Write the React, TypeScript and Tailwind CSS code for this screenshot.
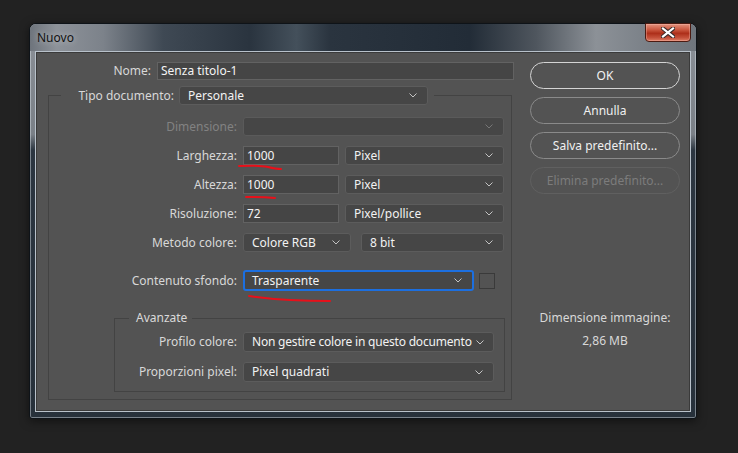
import React from "react";

function Chevron({ dim = false }: { dim?: boolean }) {
  return (
    <svg width="8" height="5" viewBox="0 0 8 5" className="shrink-0">
      <polyline
        points="0.5,0.5 4,4 7.5,0.5"
        fill="none"
        stroke={dim ? "#777" : "#c4c4c4"}
        strokeWidth="1"
      />
    </svg>
  );
}

function Select({
  value,
  w,
  h = "h-[19px]",
  active = false,
  disabled = false,
  tight = false,
}: {
  value?: string;
  w: string;
  h?: string;
  active?: boolean;
  disabled?: boolean;
  tight?: boolean;
}) {
  return (
    <div
      className={`${w} ${h} flex shrink-0 items-center justify-between gap-[4px] rounded-[3px] bg-[#464646] pr-[10px] ${
        active
          ? "border-2 border-[#1c6fe0] pl-[7px]"
          : disabled
          ? "border border-[#5a5a5a] bg-[#4c4c4c] pl-[8px]"
          : "border border-[#5c5c5c] pl-[8px]"
      }`}
    >
      <span className={`whitespace-nowrap text-[#f2f2f2] ${tight ? "tracking-[-0.2px]" : ""}`}>{value}</span>
      <Chevron dim={disabled} />
    </div>
  );
}

function Input({ value, w }: { value: string; w: string }) {
  return (
    <div
      className={`${w} flex h-[19px] shrink-0 items-center border border-[#626262] bg-[#454545] pl-[3px] text-[#f4f4f4]`}
    >
      {value}
    </div>
  );
}

function Label({ w, children, dim = false }: { w: string; children: React.ReactNode; dim?: boolean }) {
  return (
    <span className={`${w} shrink-0 whitespace-nowrap text-right ${dim ? "text-[#828282]" : "text-[#d8d8d8]"}`}>
      {children}
    </span>
  );
}

function Button({ children, variant = "normal" }: { children: React.ReactNode; variant?: "primary" | "normal" | "disabled" }) {
  const cls =
    variant === "primary"
      ? "border-[1.5px] border-[#d4d4d4] text-[#f2f2f2]"
      : variant === "disabled"
      ? "border border-[#606060] text-[#7c7c7c]"
      : "border border-[#8a8a8a] text-[#f0f0f0]";
  return (
    <div className={`flex h-[27px] w-[150px] items-center justify-center rounded-full ${cls}`}>
      {children}
    </div>
  );
}

export default function App() {
  return (
    <div className="relative h-[453px] w-[738px] overflow-hidden bg-[#222222] pl-[29px] pt-[23px] font-['Noto_Sans',sans-serif] text-[12px] leading-[16px]">
      {/* window */}
      <div className="relative flex h-[396px] w-[668px] flex-col rounded-t-[7px] rounded-b-[3px] border border-[#0e1318] bg-[linear-gradient(180deg,#8c9198_0%,#7a8087_28%,#2c3641_32%,#27313b_100%)] shadow-[inset_0_0_0_1px_rgba(220,228,236,0.45),0_2px_10px_rgba(0,0,0,0.5)]">
        {/* title bar */}
        <div className="flex h-[27px] items-center rounded-t-[6px] bg-[linear-gradient(90deg,#6e747c_0%,#8d9299_4%,#7c828a_11%,#3f4954_20%,#2a343f_33%,#44505b_40%,#2a343f_45%,#222c37_66%,#4f565e_76%,#8c9197_85%,#7c8289_92%,#6f757c_100%)] pl-[7px] pt-[1px]">
          <span className="text-[#111] [text-shadow:0_0_6px_rgba(255,255,255,0.5)]">Nuovo</span>
        </div>
        {/* close button */}
        <div className="absolute right-[5px] top-[-1px] flex h-[19px] w-[46px] items-center justify-center rounded-b-[4px] border border-[#4b1b12] bg-[linear-gradient(180deg,#e3937f_0%,#c9553d_35%,#ad2f1a_55%,#c4503a_80%,#dd7c63_100%)] shadow-[inset_0_0_0_1px_rgba(255,200,190,0.35)]">
          <svg width="14" height="11" viewBox="0 0 14 11">
            <path d="M2 1.5 L12 9.5 M12 1.5 L2 9.5" stroke="#3a2a28" strokeWidth="4.2" strokeLinecap="square" />
            <path d="M2 1.5 L12 9.5 M12 1.5 L2 9.5" stroke="#ffffff" strokeWidth="2.2" strokeLinecap="square" />
          </svg>
        </div>

        {/* content */}
        <div className="mx-[5px] mb-[6px] flex flex-1 border border-[#b8c1ca] bg-[#535353] shadow-[inset_0_0_0_1px_#3a3a3a]">
          {/* left column */}
          <div className="flex w-[478px] flex-col">
            <div className="mt-[10px] flex h-[18px] items-center gap-[6px]">
              <Label w="w-[115px]">Nome:</Label>
              <div className="flex h-[18px] w-[357px] items-center border border-[#626262] bg-[#454545] pl-[3px] text-[#f4f4f4]">
                Senza titolo-1
              </div>
            </div>

            <fieldset className="ml-[12px] mt-[6px] w-[464px] border border-[#434343] pb-[7px]">
              <legend className="ml-[12px] pr-[6px]">
                <div className="flex items-center gap-[5px]">
                  <Label w="w-[113px]">Tipo documento:</Label>
                  <Select value="Personale" w="w-[249px]" />
                </div>
              </legend>

              <div className="flex flex-col gap-[10px] pt-[12px]">
                <div className="flex items-center gap-[6px]">
                  <Label w="w-[188px]" dim>
                    Dimensione:
                  </Label>
                  <Select w="w-[261px]" disabled />
                </div>
                <div className="flex items-center gap-[6px]">
                  <Label w="w-[188px]">Larghezza:</Label>
                  <Input value="1000" w="w-[96px]" />
                  <Select value="Pixel" w="w-[159px]" />
                </div>
                <div className="flex items-center gap-[6px]">
                  <Label w="w-[188px]">Altezza:</Label>
                  <Input value="1000" w="w-[96px]" />
                  <Select value="Pixel" w="w-[159px]" />
                </div>
                <div className="flex items-center gap-[6px]">
                  <Label w="w-[188px]">Risoluzione:</Label>
                  <Input value="72" w="w-[96px]" />
                  <Select value="Pixel/pollice" w="w-[159px]" />
                </div>
                <div className="flex items-center gap-[10px]">
                  <div className="flex items-center gap-[6px]">
                    <Label w="w-[188px]">Metodo colore:</Label>
                    <Select value="Colore RGB" w="w-[108px]" />
                  </div>
                  <Select value="8 bit" w="w-[143px]" />
                </div>
                <div className="mt-[8px] flex items-center gap-[5px]">
                  <div className="flex items-center gap-[6px]">
                    <Label w="w-[188px]">Contenuto sfondo:</Label>
                    <Select value="Trasparente" w="w-[231px]" h="h-[21px]" active />
                  </div>
                  <div className="h-[16px] w-[16px] border border-[#3a3a3a]" />
                </div>

                <fieldset className="ml-[65px] mt-[9px] w-[391px] border border-[#434343] pb-[9px]">
                  <legend className="ml-[14px] pl-[7px] pr-[5px] text-[#dadada]">Avanzate</legend>
                  <div className="flex flex-col gap-[10px] pt-[6px]">
                    <div className="flex items-center gap-[6px]">
                      <Label w="w-[122px]">Profilo colore:</Label>
                      <Select value="Non gestire colore in questo documento" w="w-[251px]" h="h-[20px]" tight />
                    </div>
                    <div className="flex items-center gap-[6px]">
                      <Label w="w-[122px]">Proporzioni pixel:</Label>
                      <Select value="Pixel quadrati" w="w-[251px]" h="h-[20px]" />
                    </div>
                  </div>
                </fieldset>
              </div>
            </fieldset>
          </div>

          {/* right column */}
          <div className="ml-[16px] flex w-[150px] flex-col pt-[10px]">
            <div className="flex flex-col gap-[8px]">
              <Button variant="primary">OK</Button>
              <Button>Annulla</Button>
              <Button>Salva predefinito...</Button>
              <Button variant="disabled">Elimina predefinito...</Button>
            </div>
            <div className="mt-[116px] text-center text-[#d8d8d8]">Dimensione immagine:</div>
            <div className="mt-[7px] text-center text-[#d8d8d8]">2,86 MB</div>
          </div>
        </div>
      </div>

      {/* red hand-drawn marks */}
      <svg className="pointer-events-none absolute left-0 top-0" width="738" height="453" viewBox="0 0 738 453">
        <path d="M239 166 Q260 165 268 167 T281 169" fill="none" stroke="#e8101a" strokeWidth="2" strokeLinecap="round" />
        <path d="M246 197 Q262 197 275 198" fill="none" stroke="#e8101a" strokeWidth="2" strokeLinecap="round" />
        <path d="M249 296 Q270 299 290 300 T330 301" fill="none" stroke="#e8101a" strokeWidth="2" strokeLinecap="round" />
      </svg>
    </div>
  );
}
